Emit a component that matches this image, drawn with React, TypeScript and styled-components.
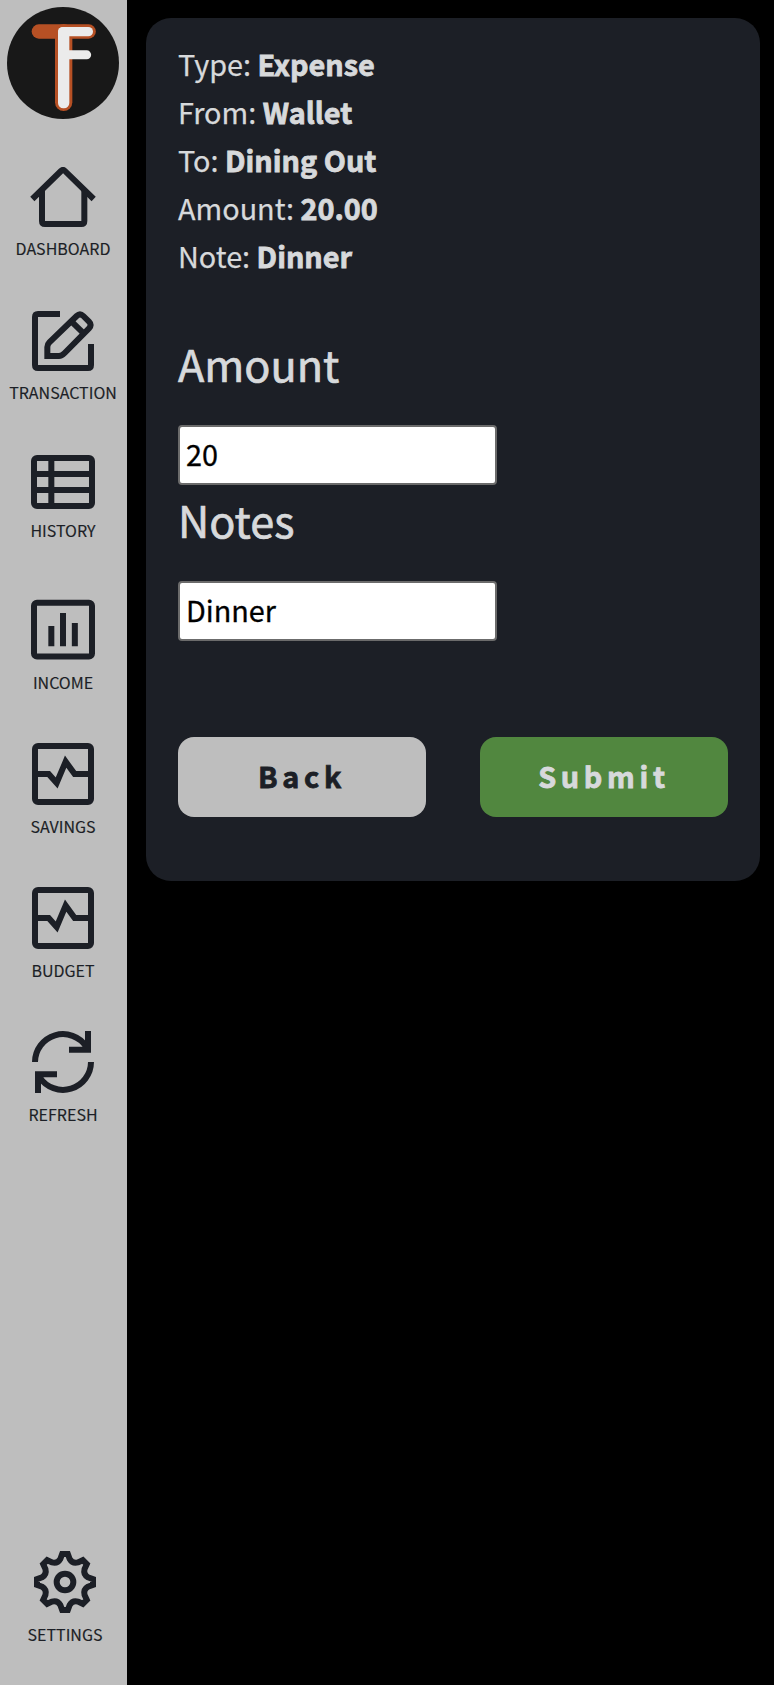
import React from "react";
import styled, { createGlobalStyle } from "styled-components";

const ink = "#1c1f26";
const silver = "#bebebe";
const light = "#d7d9db";

const GlobalStyle = createGlobalStyle`
  * { box-sizing: border-box; }
  body {
    margin: 0;
    background: #000;
    font-family: "Noto Sans CJK SC", "Noto Sans", sans-serif;
  }
`;

const Page = styled.div`
  display: flex;
  min-height: 1685px;
  background: #000;
`;

const Sidebar = styled.nav`
  display: flex;
  flex-direction: column;
  align-items: center;
  width: 127px;
  flex: none;
  padding-top: 7px;
  background: ${silver};
  color: ${ink};
`;

const LogoMark = styled.svg`
  display: block;
  width: 112px;
  height: 112px;
  margin: 0 1px 48px 0;
  flex: none;
`;

const NavItem = styled.a<{ $last?: boolean }>`
  display: flex;
  flex-direction: column;
  align-items: center;
  width: 126px;
  height: ${(p) => (p.$last ? 134 : 144)}px;
  margin-top: ${(p) => (p.$last ? "auto" : "0")};
  margin-right: ${(p) => (p.$last ? "-3px" : "1px")};
  flex: none;
  color: inherit;
  text-decoration: none;
`;

const Glyph = styled.svg`
  display: block;
  flex: none;
  fill: none;
  stroke: currentColor;
  stroke-width: 18;
`;

const NavLabel = styled.span`
  margin-top: 9px;
  font-size: 16px;
  line-height: 24px;
  white-space: nowrap;
  -webkit-text-stroke: 0.15px currentColor;
`;

const Main = styled.main`
  flex: 1;
  padding: 18px 14px 0 19px;
`;

const Card = styled.section`
  height: 863px;
  padding: 22px 32px 64px;
  border-radius: 25px;
  background: ${ink};
  color: ${light};
`;

const SummaryRow = styled.p`
  margin: 0;
  font-size: 28.8px;
  line-height: 48px;
  -webkit-text-stroke: 0.25px currentColor;
`;

const Strong = styled.strong`
  font-weight: 700;
  -webkit-text-stroke: 0.8px currentColor;
`;

const Form = styled.form`
  display: flex;
  flex-direction: column;
  align-items: flex-start;
  padding-top: 45px;
`;

const FieldLabel = styled.label`
  display: block;
  height: 100px;
  padding-top: 6px;
  font-size: 43.2px;
  line-height: 64px;
  -webkit-text-stroke: 0.7px currentColor;
`;

const Field = styled.input`
  display: block;
  width: 319px;
  height: 60px;
  padding: 0 6px 4px;
  border: 2px solid #6b6b6b;
  border-radius: 4px;
  outline: none;
  background: #fff;
  color: #000;
  font: 400 28.8px "Noto Sans CJK SC", sans-serif;
  -webkit-text-stroke: 0.3px currentColor;
`;

const FieldGroup = styled.div`
  height: 156px;
`;

const Actions = styled.div`
  display: flex;
  justify-content: space-between;
  width: 100%;
  padding-top: 100px;
`;

const Button = styled.button<{ $primary?: boolean }>`
  width: 248px;
  height: 80px;
  padding: 0 0 4px;
  border: 0;
  border-radius: 16px;
  background: ${(p) => (p.$primary ? "#51873f" : silver)};
  color: ${(p) => (p.$primary ? light : ink)};
  font: 700 28.8px "Noto Sans CJK SC", sans-serif;
  letter-spacing: 4.7px;
  -webkit-text-stroke: 0.8px currentColor;
`;

function Logo() {
  return (
    <LogoMark viewBox="21 21 336 336" strokeLinecap="round" strokeLinejoin="round" fill="none">
      <circle cx="189" cy="189" r="168" fill="#181818" />
      <g stroke="#b65024">
        <path d="M116.500 94.500H266" strokeWidth="43" />
        <path d="M191 98V307" strokeWidth="52" />
      </g>
      <rect x="174" y="81" width="34" height="244" rx="16" fill="#ebebeb" />
      <rect x="174" y="81" width="105" height="28" rx="14" fill="#ebebeb" />
      <path d="M195 151H260a13.500 13.500 0 0 1 0 27H195z" fill="#ebebeb" />
    </LogoMark>
  );
}

const HomeIcon = () => (
  <Glyph width="66" height="60" viewBox="0 0 198 180">
    <path d="M7 96L93 12Q99 6 105 12L191 96" />
    <path d="M36 68V162Q36 171 45 171H154Q163 171 163 162V68" />
  </Glyph>
);

const EditIcon = () => (
  <Glyph width="62" height="60" viewBox="0 0 186 180">
    <path d="M84 9H18Q9 9 9 18V162Q9 171 18 171H168Q177 171 177 162V99" />
    <path d="M46 135V108Q46 100 52 94L134 15Q144 5 154 15L171 32Q181 42 171 52L98 126Q89 135 81 135Z" />
    <path d="M118 31L155 67" />
  </Glyph>
);

const TableIcon = () => (
  <Glyph width="64" height="54" viewBox="0 0 192 162">
    <rect x="9" y="9" width="174" height="144" rx="9" />
    <path d="M9 57H183M9 105H183M61 9V153" />
  </Glyph>
);

const ChartIcon = () => (
  <Glyph width="64" height="62" viewBox="0 0 192 186">
    <rect x="9" y="11.500" width="174" height="161" rx="9" />
    <path d="M61 81V142M96 42V142M131.500 72V142" />
  </Glyph>
);

const PulseIcon = () => (
  <Glyph width="62" height="62" viewBox="0 0 186 186">
    <rect x="9" y="9" width="168" height="168" rx="9" />
    <path d="M9 93H50L74 120L101 56L128 93H177" />
  </Glyph>
);

const RefreshIcon = () => (
  <Glyph width="62" height="62" viewBox="0 0 186 186">
    <path d="M9 93A84 84 0 0 1 163 47M168 0V56H111" />
    <path d="M177 93A84 84 0 0 1 23 139M18 186V130H75" />
  </Glyph>
);

const gearTooth = [
  [-8.5, -84],
  [8.5, -84],
  [14, -69],
  [22.5, -54.4],
  [38.9, -58.7],
];

function gearPath() {
  let d = "";
  for (let i = 0; i < 8; i++) {
    const a = (i * Math.PI) / 4;
    const [p0, p1, p2, c, p3] = gearTooth.map(
      ([x, y]) =>
        `${(93 + x * Math.cos(a) - y * Math.sin(a)).toFixed(2)} ${(93 + x * Math.sin(a) + y * Math.cos(a)).toFixed(2)}`
    );
    d += `${i ? "L" : "M"}${p0}L${p1}L${p2}Q${c} ${p3}`;
  }
  return d + "Z";
}

const GearIcon = () => (
  <Glyph width="62" height="62" viewBox="0 0 186 186">
    <path d={gearPath()} />
    <circle cx="93" cy="93" r="25" />
  </Glyph>
);

const navigation = [
  { label: "DASHBOARD", Icon: HomeIcon },
  { label: "TRANSACTION", Icon: EditIcon },
  { label: "HISTORY", Icon: TableIcon },
  { label: "INCOME", Icon: ChartIcon },
  { label: "SAVINGS", Icon: PulseIcon },
  { label: "BUDGET", Icon: PulseIcon },
  { label: "REFRESH", Icon: RefreshIcon },
];

const summary = [
  ["Type", "Expense"],
  ["From", "Wallet"],
  ["To", "Dining Out"],
  ["Amount", "20.00"],
  ["Note", "Dinner"],
];

export default function App() {
  return (
    <Page>
      <GlobalStyle />
      <Sidebar>
        <Logo />
        {navigation.map(({ label, Icon }) => (
          <NavItem key={label}>
            <Icon />
            <NavLabel>{label}</NavLabel>
          </NavItem>
        ))}
        <NavItem $last>
          <GearIcon />
          <NavLabel>SETTINGS</NavLabel>
        </NavItem>
      </Sidebar>
      <Main>
        <Card>
          {summary.map(([name, value]) => (
            <SummaryRow key={name}>
              {name}: <Strong>{value}</Strong>
            </SummaryRow>
          ))}
          <Form onSubmit={(e) => e.preventDefault()}>
            <FieldGroup>
              <FieldLabel htmlFor="amount">Amount</FieldLabel>
              <Field id="amount" defaultValue="20" />
            </FieldGroup>
            <FieldGroup>
              <FieldLabel htmlFor="notes">Notes</FieldLabel>
              <Field id="notes" defaultValue="Dinner" />
            </FieldGroup>
            <Actions>
              <Button type="button">Back</Button>
              <Button type="submit" $primary>Submit</Button>
            </Actions>
          </Form>
        </Card>
      </Main>
    </Page>
  );
}
